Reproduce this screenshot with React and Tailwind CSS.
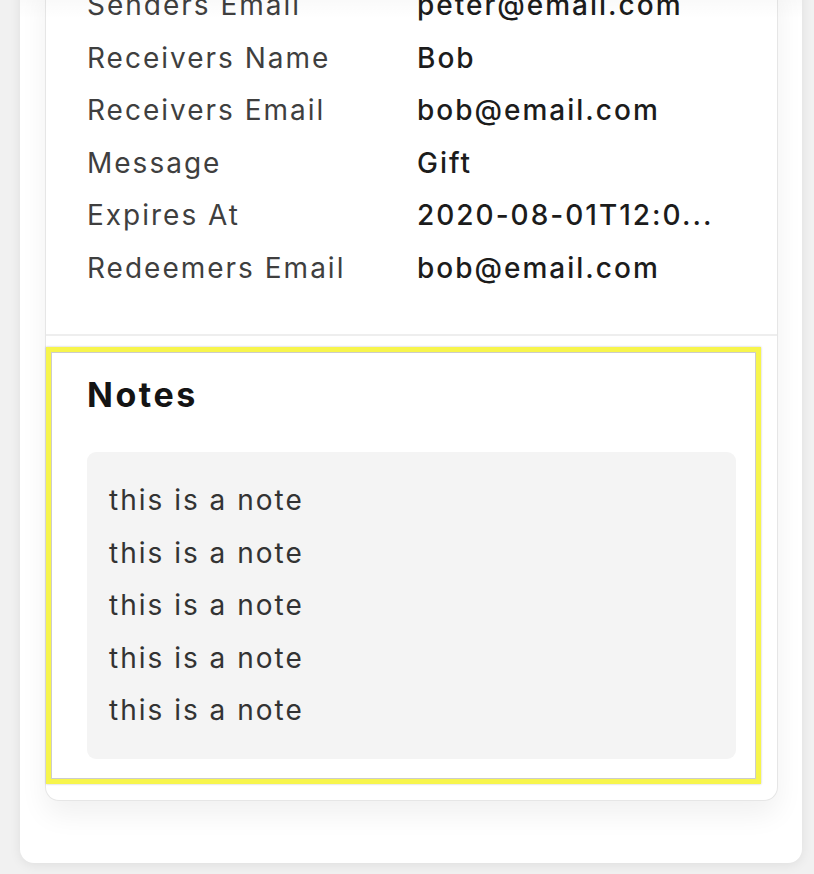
import React from "react";

const rows = [
  ["Senders Email", "peter@email.com"],
  ["Receivers Name", "Bob"],
  ["Receivers Email", "bob@email.com"],
  ["Message", "Gift"],
  ["Expires At", "2020-08-01T12:0..."],
  ["Redeemers Email", "bob@email.com"],
];

export default function App() {
  return (
    <div className="min-h-[874px] bg-[#f1f1f1] pl-[20px] pr-[12px] font-['Inter',sans-serif] overflow-hidden">
      <div className="relative bg-white rounded-b-[14px] shadow-[0_2px_12px_rgba(0,0,0,0.08)] pb-[62px]">
        <div className="pointer-events-none absolute left-0 right-0 top-0 h-[40px] bg-gradient-to-b from-[rgba(0,0,0,0.045)] to-transparent z-10"></div>
        <div className="ml-[25px] mr-[24px] bg-white border border-t-0 border-[#e6e6e6] rounded-b-[14px] shadow-[0_14px_28px_rgba(0,0,0,0.06)]">
          <div className="-mt-[21px] pl-[41px] pb-[40px]">
            {rows.map(([l, v]) => (
              <div key={l} className="flex text-[28px] leading-[52.5px] tracking-[2px]">
                <div className="w-[330px] shrink-0 text-[#3f3f3f]">{l}</div>
                <div className="font-medium text-[#1c1c1c] whitespace-nowrap">{v}</div>
              </div>
            ))}
          </div>
          <div className="h-[2px] bg-[#eeeeee]"></div>
          <div className="mt-[11px] mb-[16px] mr-[16px] border-[5px] border-[#f7f54c] shadow-[inset_0_0_0_1px_rgba(0,0,0,0.2),0_0_2px_rgba(0,0,0,0.25)] pl-[36px] pr-[20px] pt-[21px] pb-[20px]">
            <h2 className="text-[34px] leading-[44px] font-bold tracking-[2.5px] text-[#141414]">Notes</h2>
            <div className="mt-[35px] bg-[#f4f4f4] rounded-[9px] px-[22px] py-[22px]">
              {Array.from({ length: 5 }).map((_, i) => (
                <div key={i} className="text-[28px] leading-[52.5px] tracking-[2px] text-[#333333]">this is a note</div>
              ))}
            </div>
          </div>
        </div>
      </div>
    </div>
  );
}
